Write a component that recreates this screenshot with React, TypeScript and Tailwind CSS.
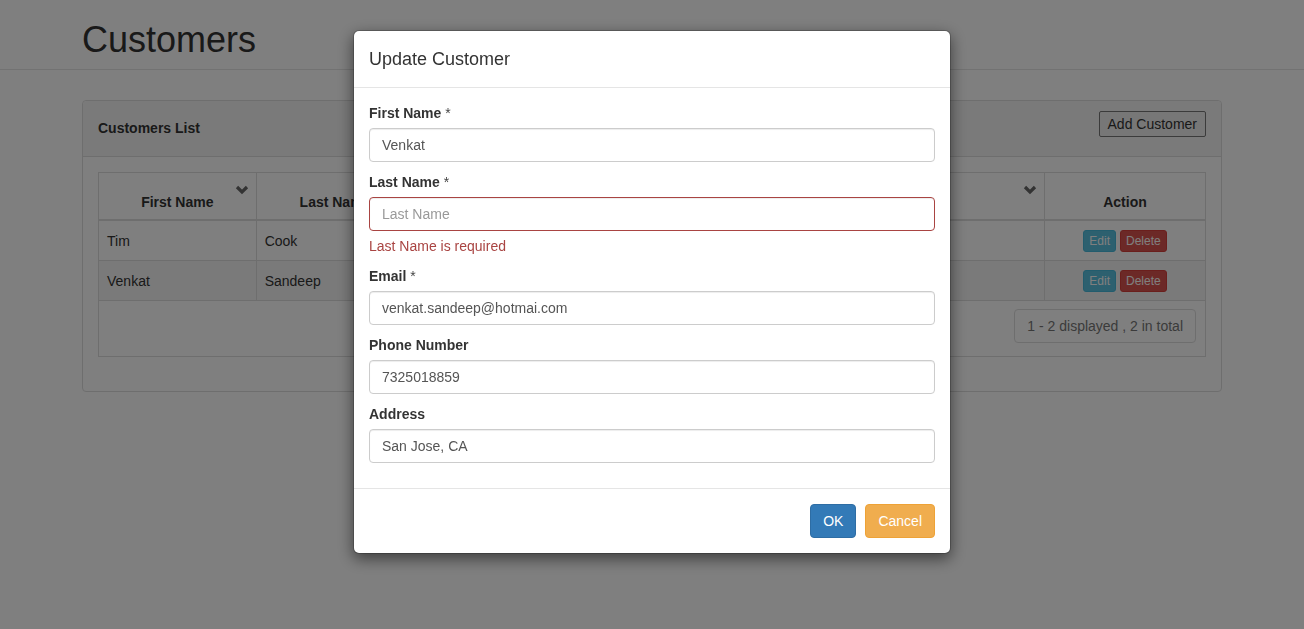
import React from "react";

function Chevron() {
  return (
    <svg width="14" height="10" viewBox="0 0 14 10" className="absolute right-[7px] top-[12px]">
      <polyline points="2,2 7,7 12,2" fill="none" stroke="#666" strokeWidth="3.2" strokeLinecap="butt" strokeLinejoin="miter" />
    </svg>
  );
}

const headers = ["First Name", "Last Name", "Email", "Phone Number", "Address", "", "Action"];
const rows = [
  { first: "Tim", last: "Cook", email: "tim.cook@apple.com", phone: "4085551234", address: "Cupertino" },
  { first: "Venkat", last: "Sandeep", email: "venkat@hotmai.com", phone: "7325018859", address: "San Jose" },
];

function Field({ label, required, value, placeholder, error }: { label: string; required?: boolean; value?: string; placeholder?: string; error?: string }) {
  return (
    <div className="mb-[10px]">
      <div className="font-bold text-[#333] mb-[5px] leading-[20px]">
        {label}
        {required && <span className="font-normal text-[#444]"> *</span>}
      </div>
      <input
        readOnly
        value={value ?? ""}
        placeholder={placeholder}
        className={
          "block w-full h-[34px] px-[12px] rounded-[4px] border text-[14px] text-[#555] placeholder:text-[#999] outline-none shadow-[inset_0_1px_1px_rgba(0,0,0,0.075)] " +
          (error ? "border-[#a94442]" : "border-[#ccc]")
        }
      />
      {error && <div className="mt-[5px] text-[#a94442] leading-[20px]">{error}</div>}
    </div>
  );
}

export default function App() {
  return (
    <div className="relative min-h-[629px] bg-white font-['Liberation_Sans',Arial,sans-serif] text-[14px] leading-[20px] text-[#333]">
      <div className="h-[70px] border-b border-[#e5e5e5]">
        <div className="w-[1140px] mx-auto pt-[20px]">
          <h1 className="text-[36px] leading-[40px] font-normal text-[#333]">Customers</h1>
        </div>
      </div>

      <div className="w-[1140px] mx-auto mt-[30px]">
        <div className="border border-[#ddd] rounded-[4px]">
          <div className="h-[56px] bg-[#f5f5f5] border-b border-[#ddd] rounded-t-[4px] flex justify-between items-start px-[15px]">
            <div className="font-bold mt-[17px]">Customers List</div>
            <button className="mt-[10px] h-[26px] px-[8px] border border-[#767676] bg-[#efefef] rounded-[2px] text-[14px] text-[#333] leading-[20px]">
              Add Customer
            </button>
          </div>
          <div className="p-[15px] pb-[34px]">
            <div className="border border-[#ddd]">
              <div className="grid grid-cols-[repeat(6,minmax(0,1fr))_160px]">
                {headers.map((h, i) => (
                  <div
                    key={i}
                    className={
                      "relative h-[48px] border-b-2 border-[#ddd] flex items-end justify-center pb-[7px] font-bold " +
                      (i < 6 ? "border-r" : "")
                    }
                  >
                    {i < 6 && <Chevron />}
                    {h}
                  </div>
                ))}
              </div>
              {rows.map((r, ri) => (
                <div
                  key={ri}
                  className={"grid grid-cols-[repeat(6,minmax(0,1fr))_160px] " + (ri === 1 ? "bg-[#f5f5f5]" : "bg-white")}
                >
                  <div className="h-[40px] border-b border-r border-[#ddd] flex items-center px-[8px]">{r.first}</div>
                  <div className="h-[40px] border-b border-r border-[#ddd] flex items-center px-[8px]">{r.last}</div>
                  <div className="h-[40px] border-b border-r border-[#ddd] flex items-center px-[8px] overflow-hidden whitespace-nowrap">{r.email}</div>
                  <div className="h-[40px] border-b border-r border-[#ddd] flex items-center px-[8px]">{r.phone}</div>
                  <div className="h-[40px] border-b border-r border-[#ddd] flex items-center px-[8px]">{r.address}</div>
                  <div className="h-[40px] border-b border-r border-[#ddd] flex items-center px-[8px]"></div>
                  <div className="h-[40px] border-b border-[#ddd] flex items-center justify-center gap-[4px]">
                    <button className="h-[22px] px-[5px] text-[12px] leading-[18px] text-white bg-[#5bc0de] border border-[#46b8da] rounded-[3px]">Edit</button>
                    <button className="h-[22px] px-[5px] text-[12px] leading-[18px] text-white bg-[#d9534f] border border-[#d43f3a] rounded-[3px]">Delete</button>
                  </div>
                </div>
              ))}
              <div className="h-[55px] flex justify-end items-start pt-[8px] pr-[9px]">
                <div className="h-[34px] px-[12px] border border-[#ddd] rounded-[4px] text-[#777] flex items-center">
                  1 - 2 displayed , 2 in total
                </div>
              </div>
            </div>
          </div>
        </div>
      </div>

      <div className="fixed inset-0 bg-black/50" />
      <div className="fixed inset-0 overflow-hidden">
        <div className="w-[598px] mx-auto mt-[30px] bg-white border border-black/20 rounded-[6px] shadow-[0_5px_15px_rgba(0,0,0,0.5)] bg-clip-padding">
          <div className="p-[15px] border-b border-[#e5e5e5]">
            <div className="text-[18px] leading-[26px] text-[#333]">Update Customer</div>
          </div>
          <div className="p-[15px]">
            <Field label="First Name" required value="Venkat" />
            <Field label="Last Name" required placeholder="Last Name" error="Last Name is required" />
            <Field label="Email" required value="venkat.sandeep@hotmai.com" />
            <Field label="Phone Number" value="7325018859" />
            <Field label="Address" value="San Jose, CA" />
          </div>
          <div className="p-[15px] border-t border-[#e5e5e5] flex justify-end gap-[9px]">
            <button className="h-[34px] px-[12px] rounded-[4px] border border-[#2e6da4] bg-[#337ab7] text-white text-[14px]">OK</button>
            <button className="h-[34px] px-[12px] rounded-[4px] border border-[#eea236] bg-[#f0ad4e] text-white text-[14px]">Cancel</button>
          </div>
        </div>
      </div>
    </div>
  );
}
